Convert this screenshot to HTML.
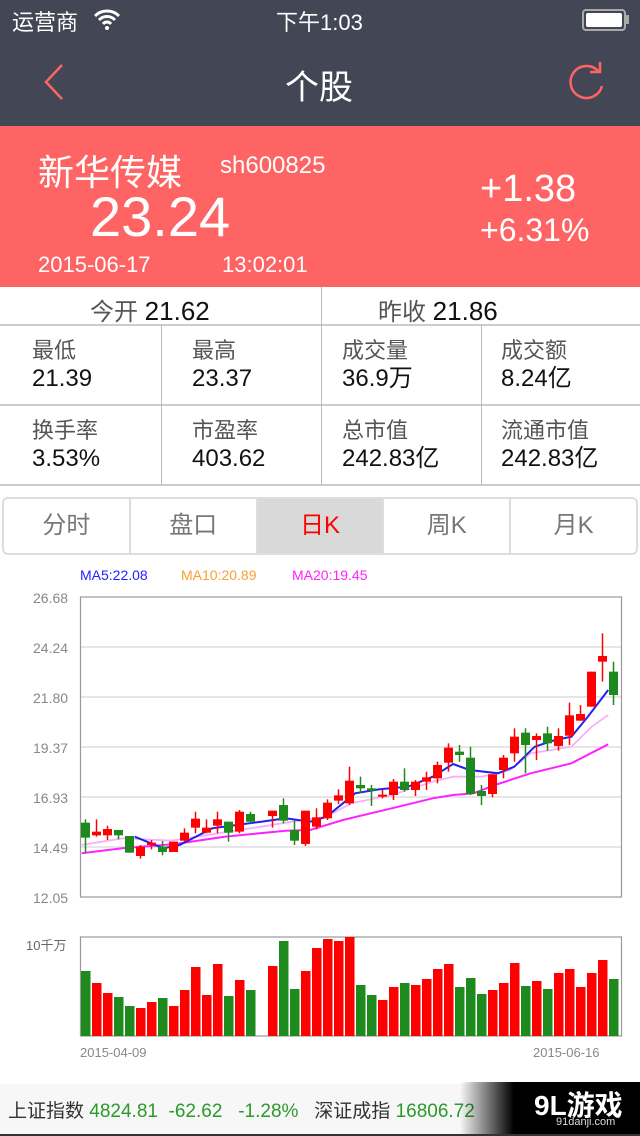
<!DOCTYPE html>
<html><head><meta charset="utf-8"><style>
*{margin:0;padding:0;box-sizing:border-box}
body{width:640px;height:1136px;overflow:hidden;background:#fff;font-family:"Liberation Sans","Noto Sans CJK SC",sans-serif;position:relative}
.a{position:absolute;white-space:nowrap}
</style></head><body>
<div class="a" style="left:0;top:0;width:640px;height:126px;background:#424655"></div>
<div class="a" style="left:12px;top:5px;font-size:22px;color:#fff">运营商</div>
<svg class="a" style="left:92px;top:8px" width="30" height="22" viewBox="0 0 30 22"><path d="M3 8a17 17 0 0 1 24 0M7 12a11 11 0 0 1 16 0M11 16a5 5 0 0 1 8 0" stroke="#fff" stroke-width="3" fill="none"/><circle cx="15" cy="20" r="2" fill="#fff"/></svg>
<div class="a" style="left:276px;top:5px;font-size:22px;color:#fff">下午1:03</div>
<div class="a" style="left:582px;top:9px;width:44px;height:22px;border:2px solid #aaa;border-radius:4px;padding:2px"><div style="width:100%;height:100%;background:#fff;border-radius:2px"></div></div>
<div class="a" style="left:626px;top:15px;width:3px;height:9px;background:#aaa"></div>
<svg class="a" style="left:40px;top:62px" width="30" height="40"><path d="M22 3 L6 20 L22 37" stroke="#fe6464" stroke-width="2.5" fill="none"/></svg>
<div class="a" style="left:285px;top:60px;font-size:34px;color:#fff">个股</div>
<svg class="a" style="left:566px;top:60px" width="42" height="44" viewBox="0 0 42 44"><path d="M33 12 A16 16 0 1 0 36 26" stroke="#fe6464" stroke-width="2.5" fill="none"/><path d="M24 12 H34 V2" stroke="#fe6464" stroke-width="2.5" fill="none"/></svg>
<div class="a" style="left:0;top:126px;width:640px;height:161px;background:#fe6464"></div>
<div class="a" style="left:38px;top:144px;font-size:36px;color:#fff">新华传媒</div>
<div class="a" style="left:220px;top:152px;font-size:24px;color:#fff">sh600825</div>
<div class="a" style="left:90px;top:184px;font-size:56px;color:#fff">23.24</div>
<div class="a" style="left:480px;top:168px;font-size:38px;color:#fff">+1.38</div>
<div class="a" style="left:480px;top:212px;font-size:32px;color:#fff">+6.31%</div>
<div class="a" style="left:38px;top:252px;font-size:22px;color:#fff">2015-06-17</div>
<div class="a" style="left:222px;top:252px;font-size:22px;color:#fff">13:02:01</div>
<div class="a" style="left:0;top:324px;width:640px;height:2px;background:#ccc"></div>
<div class="a" style="left:0;top:404px;width:640px;height:2px;background:#ccc"></div>
<div class="a" style="left:0;top:484px;width:640px;height:2px;background:#ccc"></div>
<div class="a" style="left:321px;top:287px;width:1px;height:198px;background:#bbb"></div>
<div class="a" style="left:161px;top:325px;width:1px;height:160px;background:#bbb"></div>
<div class="a" style="left:481px;top:325px;width:1px;height:160px;background:#bbb"></div>
<div class="a" style="left:90px;top:292px;font-size:24px;color:#555">今开 <span style="color:#111;font-size:26px">21.62</span></div>
<div class="a" style="left:378px;top:292px;font-size:24px;color:#555">昨收 <span style="color:#111;font-size:26px">21.86</span></div>
<div style="font-size:22px;line-height:28px">
<div class="a" style="left:32px;top:337px;color:#555">最低<br><span style="color:#111;font-size:24px">21.39</span></div>
<div class="a" style="left:192px;top:337px;color:#555">最高<br><span style="color:#111;font-size:24px">23.37</span></div>
<div class="a" style="left:342px;top:337px;color:#555">成交量<br><span style="color:#111;font-size:24px">36.9万</span></div>
<div class="a" style="left:501px;top:337px;color:#555">成交额<br><span style="color:#111;font-size:24px">8.24亿</span></div>
<div class="a" style="left:32px;top:417px;color:#555">换手率<br><span style="color:#111;font-size:24px">3.53%</span></div>
<div class="a" style="left:192px;top:417px;color:#555">市盈率<br><span style="color:#111;font-size:24px">403.62</span></div>
<div class="a" style="left:342px;top:417px;color:#555">总市值<br><span style="color:#111;font-size:24px">242.83亿</span></div>
<div class="a" style="left:501px;top:417px;color:#555">流通市值<br><span style="color:#111;font-size:24px">242.83亿</span></div>
</div>
<div class="a" style="left:2px;top:497px;width:636px;height:58px;border:2px solid #ddd;border-radius:6px;display:flex;font-size:24px;color:#777;overflow:hidden">
<div style="flex:1;text-align:center;line-height:54px;border-right:2px solid #ddd">分时</div>
<div style="flex:1;text-align:center;line-height:54px;border-right:2px solid #ddd">盘口</div>
<div style="flex:1;text-align:center;line-height:54px;border-right:2px solid #ddd;background:#d9d9d9;color:#f00">日K</div>
<div style="flex:1;text-align:center;line-height:54px;border-right:2px solid #ddd">周K</div>
<div style="flex:1;text-align:center;line-height:54px">月K</div>
</div>
<svg id="ch" class="a" style="left:0;top:560px" width="640" height="520" font-family="Liberation Sans,sans-serif"></svg>
<div class="a" style="left:0;top:1084px;width:640px;height:52px;background:#f7f7f7"></div>
<div class="a" style="left:8px;top:1096px;font-size:19px;color:#333">上证指数 <span style="color:#2a9a2a">4824.81 &nbsp;-62.62 &nbsp; -1.28%</span> &nbsp; 深证成指 <span style="color:#2a9a2a">16806.72</span></div>
<div class="a" style="left:460px;top:1082px;width:180px;height:52px;background:linear-gradient(90deg,rgba(0,0,0,0),#000 30%)"></div>
<div class="a" style="left:534px;top:1084px;font-size:28px;font-weight:bold;color:#fff">9L游戏</div>
<div class="a" style="left:556px;top:1116px;font-size:11px;color:#ddd">91danji.com</div>
<div class="a" style="left:0;top:1134px;width:640px;height:2px;background:#333"></div>
<script>
var s='';
s+='<text x="80" y="20" font-size="14" fill="#22f">MA5:22.08</text><text x="181" y="20" font-size="14" fill="#f9a030">MA10:20.89</text><text x="292" y="20" font-size="14" fill="#f2f">MA20:19.45</text>';
var labs=['26.68','24.24','21.80','19.37','16.93','14.49','12.05'];
for(var i=0;i<7;i++){var y=37+i*50;if(i>0&&i<6)s+='<line x1="80" x2="622" y1="'+y+'" y2="'+y+'" stroke="#ddd" stroke-width="1.5"/>';s+='<text x="33" y="'+(y+6)+'" font-size="14" fill="#888">'+labs[i]+'</text>';}
s+='<rect x="80.5" y="37" width="541" height="300" fill="none" stroke="#999" stroke-width="1.2"/>';
var c=[['G',788,833,778,878],['R',815,826,778,830],['R',807,826,797,840],['G',810,826,810,838],['G',828,878,828,878],['R',860,888,855,896],['R',848,855,840,868],['G',860,876,843,886],['R',845,876,845,876],['R',818,842,805,845],['R',776,803,755,820],['R',803,818,778,820],['R',778,797,755,820],['G',785,818,785,845],['R',755,815,750,820],['G',762,785,755,790],null,['R',752,768,752,803],['G',735,782,715,790],['G',810,842,782,855],['R',752,852,752,858],['R',772,800,745,808],['R',728,775,718,780],['R',706,722,688,732],['R',662,730,620,735],['G',675,685,650,700],['G',685,692,675,738],['R',704,710,690,715],['R',665,705,657,720],['G',665,690,625,695],['R',665,690,660,708],['R',652,665,635,690],['R',615,655,605,670],['R',563,608,550,635],['G',575,585,555,605],['G',593,702,560,705],['G',693,708,675,735],['R',643,702,643,712],['R',593,630,585,655],['R',530,580,505,605],['G',518,555,505,640],['R',528,540,520,600],['G',520,550,500,572],['R',528,558,505,572],['R',466,527,428,555],['R',462,482,435,482],['R',335,440,335,440],['R',288,305,220,365],['G',335,405,305,435]];
function Y(z){return z/3;}
var ma=function(p,col,w){var d='';for(var i=0;i<p.length;i+=2)d+=(i?'L':'M')+(p[i]/2.45).toFixed(1)+' '+Y(p[i+1]).toFixed(1);return '<path d="'+d+'" stroke="'+col+'" stroke-width="'+w+'" fill="none"/>';};
s+=ma([200,855,300,835,420,842,560,815,640,800,700,788,800,770,860,730,960,705,1060,665,1110,650,1180,650,1250,630,1300,580,1400,560,1450,500,1490,465],'#f8b0f8',1.8);
s+=ma([200,880,300,865,430,852,550,830,700,812,760,810,840,780,960,745,1060,715,1110,705,1160,700,1220,672,1300,640,1400,610,1490,553],'#f2f',2);
s+=ma([330,830,400,865,440,855,520,805,640,785,700,775,760,785,800,770,870,700,930,688,1000,680,1060,650,1110,612,1150,630,1220,640,1260,620,1310,560,1360,540,1400,530,1440,470,1490,390],'#22e',2);
for(var i=0;i<c.length;i++){var k=c[i];if(!k)continue;var x=80+11*i,col=k[0]=='R'?'#f00':'#1e8a1e';
s+='<line x1="'+(x+5.5)+'" x2="'+(x+5.5)+'" y1="'+Y(k[3])+'" y2="'+Y(k[4])+'" stroke="'+col+'" stroke-width="1.5"/>';
s+='<rect x="'+(x+1)+'" y="'+Y(k[1])+'" width="9" height="'+Math.max(2,Y(k[2])-Y(k[1]))+'" fill="'+col+'"/>';}
// volume
var v='G65 R53 R43 G39 G30 R28 R34 G38 R30 R46 R69 R41 R72 G40 R56 G46 X0 R70 G95 G47 R65 R88 R97 R95 R99 G51 G41 R36 R49 G53 R51 R57 R67 R72 G49 G58 G42 R46 R53 R73 G50 R55 G47 R63 R67 R49 R63 R76 G57'.split(' ');
s+='<rect x="80.5" y="377" width="541" height="99" fill="none" stroke="#999" stroke-width="1.2"/>';
for(var i=0;i<v.length;i++){var h=+v[i].slice(1);if(!h)continue;var col=v[i][0]=='R'?'#f00':'#1e8a1e';s+='<rect x="'+(80+11*i+1)+'" y="'+(476-h)+'" width="9.5" height="'+h+'" fill="'+col+'"/>';}
s+='<text x="26" y="390" font-size="13" fill="#666">10千万</text>';
s+='<text x="80" y="497" font-size="13" fill="#888">2015-04-09</text><text x="533" y="497" font-size="13" fill="#888">2015-06-16</text>';
document.getElementById('ch').innerHTML=s;
</script>
</body></html>
